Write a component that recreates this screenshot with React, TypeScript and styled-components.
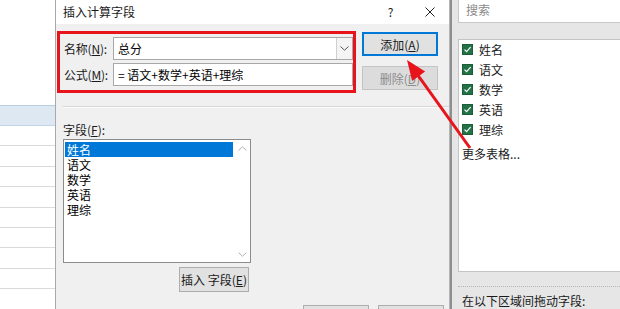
import React from 'react'
import styled, { createGlobalStyle } from 'styled-components'

const FONT = `"Microsoft YaHei", "Noto Sans CJK SC", "Noto Sans", sans-serif`

const GlobalStyle = createGlobalStyle`
  html, body {
    margin: 0;
    padding: 0;
    background: #ffffff;
    overflow: hidden;
  }
  body {
    font-family: ${FONT};
    font-size: 12px;
    color: #000000;
  }
`

const fieldNames = ['姓名', '语文', '数学', '英语', '理综']

const Screen = styled.div`
  position: relative;
  display: flex;
  width: 620px;
  height: 309px;
  overflow: hidden;
`

/* ---------- spreadsheet strip on the left ---------- */

const Sheet = styled.div`
  width: 55px;
  flex-shrink: 0;
  display: flex;
  flex-direction: column;
  padding-top: 105px;
  background: #ffffff;
`

const SheetRow = styled.div<{ $active?: boolean }>`
  height: ${({ $active }) => ($active ? 19 : 19.4)}px;
  flex-shrink: 0;
  background: ${({ $active }) => ($active ? '#dde8f3' : '#ffffff')};
  border-top: ${({ $active }) => ($active ? '1px solid #b9cde3' : 'none')};
  border-bottom: 1px solid ${({ $active }) => ($active ? '#c3d3e6' : '#dadada')};
`

/* ---------- dialog ---------- */

const Dialog = styled.div`
  width: 395px;
  flex-shrink: 0;
  display: flex;
  flex-direction: column;
  background: #f0f0f0;
  border-left: 1px solid #a9a9a9;
  border-right: 1px solid #b4b4b4;
  box-sizing: border-box;
`

const TitleBar = styled.div`
  height: 23px;
  flex-shrink: 0;
  display: flex;
  align-items: center;
  background: #ffffff;
  padding: 0 0 1px 7px;
`

const Title = styled.span`
  flex: 1;
  font-size: 12px;
  color: #1a1a1a;
`

const TitleButton = styled.span`
  width: 39px;
  display: flex;
  justify-content: center;
  font-size: 12px;
  color: #222222;
`

const DialogBody = styled.div`
  display: flex;
  flex-direction: column;
  padding: 0 5px 0 6px;
`

const TopRow = styled.div`
  display: flex;
  align-items: flex-start;
  margin-left: -5px;
`

const Highlight = styled.div`
  margin-top: 7px;
  width: 299px;
  box-sizing: border-box;
  border: 3px solid #e8141c;
  padding: 3px 0 4px 4px;
  display: flex;
  flex-direction: column;
  gap: 3px;
`

const FormRow = styled.div`
  display: flex;
  align-items: center;
`

const Label = styled.span`
  width: 49px;
  flex-shrink: 0;
  font-size: 12px;
  color: #1a1a1a;
  letter-spacing: -0.2px;
`

const Key = styled.span`
  text-decoration: underline;
  text-underline-offset: 1px;
`

const Combo = styled.div`
  width: 240px;
  height: 23px;
  box-sizing: border-box;
  display: flex;
  background: #ffffff;
  border: 1px solid #a8a8a8;
`

const ComboText = styled.span`
  flex: 1;
  padding-left: 4px;
  line-height: 21px;
  font-size: 12px;
`

const ComboArrow = styled.span`
  width: 15px;
  display: flex;
  align-items: center;
  justify-content: center;
  background: #f4f4f4;
  border-left: 1px solid #d0d0d0;
`

const TextInput = styled.div`
  width: 240px;
  height: 23px;
  box-sizing: border-box;
  background: #ffffff;
  border: 1px solid #a8a8a8;
  padding-left: 4px;
  line-height: 21px;
  font-size: 12px;
  white-space: nowrap;
`

const ButtonColumn = styled.div`
  margin: 8px 0 0 6px;
  display: flex;
  flex-direction: column;
  gap: 10px;
`

const Button = styled.div<{ $focused?: boolean; $disabled?: boolean; $width?: number; $height?: number }>`
  width: ${({ $width }) => $width ?? 76}px;
  height: ${({ $height }) => $height ?? 24}px;
  box-sizing: border-box;
  display: flex;
  align-items: center;
  justify-content: center;
  font-size: 12px;
  white-space: pre;
  color: ${({ $disabled }) => ($disabled ? '#8c8c8c' : '#1a1a1a')};
  background: ${({ $disabled }) => ($disabled ? '#dcdcdc' : '#e1e1e1')};
  border: ${({ $focused, $disabled }) =>
    $focused ? '2px solid #0078d7' : $disabled ? '1px solid #c4c4c4' : '1px solid #adadad'};
  flex-shrink: 0;
`

const Separator = styled.div`
  margin: 13px -5px 0 1px;
  height: 1px;
  background: #d6d6d6;
  border-bottom: 1px solid #fbfbfb;
`

const SectionLabel = styled.div`
  margin: 13px 0 0 1px;
  font-size: 12px;
  color: #1a1a1a;
`

const ListBox = styled.div`
  margin: 1px 0 0 1px;
  width: 188px;
  height: 124px;
  box-sizing: border-box;
  display: flex;
  background: #ffffff;
  border: 1px solid #8c8c8c;
`

const ListItems = styled.div`
  flex: 1;
  padding: 2px 1px;
  display: flex;
  flex-direction: column;
`

const ListItem = styled.div<{ $selected?: boolean }>`
  height: 15px;
  line-height: 15px;
  padding-left: 2px;
  overflow: hidden;
  font-size: 12px;
  color: ${({ $selected }) => ($selected ? '#ffffff' : '#000000')};
  background: ${({ $selected }) => ($selected ? '#0078d7' : 'transparent')};
`

const ScrollBar = styled.div`
  width: 16px;
  display: flex;
  flex-direction: column;
  justify-content: space-between;
  align-items: center;
  padding: 6px 0 5px;
`

const InsertRow = styled.div`
  width: 188px;
  margin: 4px 0 0 1px;
  display: flex;
  justify-content: flex-end;
  padding-right: 2px;
  box-sizing: border-box;
`

const FooterRow = styled.div`
  margin-top: 13px;
  display: flex;
  justify-content: flex-end;
  gap: 9px;
`

/* ---------- field list task pane ---------- */

const Pane = styled.div`
  flex: 1;
  display: flex;
  flex-direction: column;
  background: #e6e6e6;
  border-left: 2px solid #8f8f8f;
  padding-left: 6px;
`

const SearchBox = styled.div`
  height: 23px;
  box-sizing: border-box;
  display: flex;
  align-items: center;
  background: #ffffff;
  border: 1px solid #c8c8c8;
  border-top: none;
  border-right: none;
  padding: 0 0 2px 7px;
  color: #8a8a8a;
  font-size: 12px;
`

const FieldList = styled.div`
  margin-top: 16px;
  height: 239px;
  box-sizing: border-box;
  background: #ffffff;
  border: 1px solid #c4c4c4;
  border-right: none;
  display: flex;
  flex-direction: column;
  padding-left: 3px;
`

const FieldRow = styled.div`
  height: 20px;
  display: flex;
  align-items: center;
  gap: 6px;
  font-size: 12px;
  color: #1a1a1a;
`

const CheckBox = styled.span`
  width: 11px;
  height: 11px;
  display: flex;
  align-items: center;
  justify-content: center;
  background: #217346;
  border: 1px solid #1b5e39;
  box-sizing: border-box;
`

const MoreTables = styled.div`
  margin-top: 4px;
  height: 20px;
  line-height: 20px;
  font-size: 12px;
  color: #1a1a1a;
`

const DottedLine = styled.div`
  margin-top: 14px;
  border-top: 1px dotted #b8b8b8;
`

const DragHint = styled.div`
  margin: 5px 0 0 4px;
  font-size: 12px;
  color: #1a1a1a;
  white-space: nowrap;
`

/* ---------- annotation arrow ---------- */

const ArrowLayer = styled.svg`
  position: absolute;
  left: 0;
  top: 0;
  pointer-events: none;
`

const Chevron: React.FC<{ up?: boolean; color?: string }> = ({ up, color = '#606060' }) => (
  <svg width="9" height="5" viewBox="0 0 9 5">
    <path d={up ? 'M0.5 4.5 L4.5 0.8 L8.5 4.5' : 'M0.5 0.5 L4.5 4.2 L8.5 0.5'} fill="none" stroke={color} strokeWidth="1" />
  </svg>
)

const Check = () => (
  <svg width="9" height="9" viewBox="0 0 9 9">
    <path d="M1.5 4.6 L3.6 6.6 L7.6 2.2" fill="none" stroke="#ffffff" strokeWidth="1.2" />
  </svg>
)

const CloseIcon = () => (
  <svg width="10" height="10" viewBox="0 0 10 10">
    <path d="M0.5 0.5 L9.5 9.5 M9.5 0.5 L0.5 9.5" stroke="#222" strokeWidth="1" />
  </svg>
)

const App: React.FC = () => {
  // arrow from the field list up to the 添加 button
  const tail = { x: 470, y: 148 }
  const tip = { x: 407, y: 60 }
  const dx = tip.x - tail.x
  const dy = tip.y - tail.y
  const len = Math.hypot(dx, dy)
  const ux = dx / len
  const uy = dy / len
  const headLen = 20
  const headHalf = 8
  const bx = tip.x - ux * headLen
  const by = tip.y - uy * headLen
  const head = `${tip.x},${tip.y} ${bx - uy * headHalf},${by + ux * headHalf} ${bx + uy * headHalf},${by - ux * headHalf}`

  return (
    <>
      <GlobalStyle />
      <Screen>
        <Sheet>
          <SheetRow $active />
          {Array.from({ length: 9 }).map((_, i) => (
            <SheetRow key={i} />
          ))}
        </Sheet>

        <Dialog>
          <TitleBar>
            <Title>插入计算字段</Title>
            <TitleButton>?</TitleButton>
            <TitleButton>
              <CloseIcon />
            </TitleButton>
          </TitleBar>
          <DialogBody>
            <TopRow>
              <Highlight>
                <FormRow>
                  <Label>
                    名称(<Key>N</Key>):
                  </Label>
                  <Combo>
                    <ComboText>总分</ComboText>
                    <ComboArrow>
                      <Chevron color="#555" />
                    </ComboArrow>
                  </Combo>
                </FormRow>
                <FormRow>
                  <Label>
                    公式(<Key>M</Key>):
                  </Label>
                  <TextInput>= 语文+数学+英语+理综</TextInput>
                </FormRow>
              </Highlight>
              <ButtonColumn>
                <Button $focused>
                  添加(<Key>A</Key>)
                </Button>
                <Button $disabled>
                  删除(<Key>D</Key>)
                </Button>
              </ButtonColumn>
            </TopRow>

            <Separator />

            <SectionLabel>
              字段(<Key>F</Key>):
            </SectionLabel>
            <ListBox>
              <ListItems>
                {fieldNames.map((name, i) => (
                  <ListItem key={name} $selected={i === 0}>
                    {name}
                  </ListItem>
                ))}
              </ListItems>
              <ScrollBar>
                <Chevron up color="#b0b0b0" />
                <Chevron color="#b0b0b0" />
              </ScrollBar>
            </ListBox>
            <InsertRow>
              <Button $width={70} $height={25}>
                {'插入 字段('}
                <Key>E</Key>)
              </Button>
            </InsertRow>

            <FooterRow>
              <Button $width={66} $height={24} />
              <Button $width={66} $height={24} />
            </FooterRow>
          </DialogBody>
        </Dialog>

        <Pane>
          <SearchBox>搜索</SearchBox>
          <FieldList>
            {fieldNames.map((name) => (
              <FieldRow key={name}>
                <CheckBox>
                  <Check />
                </CheckBox>
                {name}
              </FieldRow>
            ))}
            <MoreTables>更多表格...</MoreTables>
          </FieldList>
          <DottedLine />
          <DragHint>在以下区域间拖动字段:</DragHint>
        </Pane>

        <ArrowLayer width="620" height="309" viewBox="0 0 620 309">
          <line x1={tail.x} y1={tail.y} x2={bx + ux * 2} y2={by + uy * 2} stroke="#e8141c" strokeWidth="3" />
          <polygon points={head} fill="#e8141c" />
        </ArrowLayer>
      </Screen>
    </>
  )
}

export default App
